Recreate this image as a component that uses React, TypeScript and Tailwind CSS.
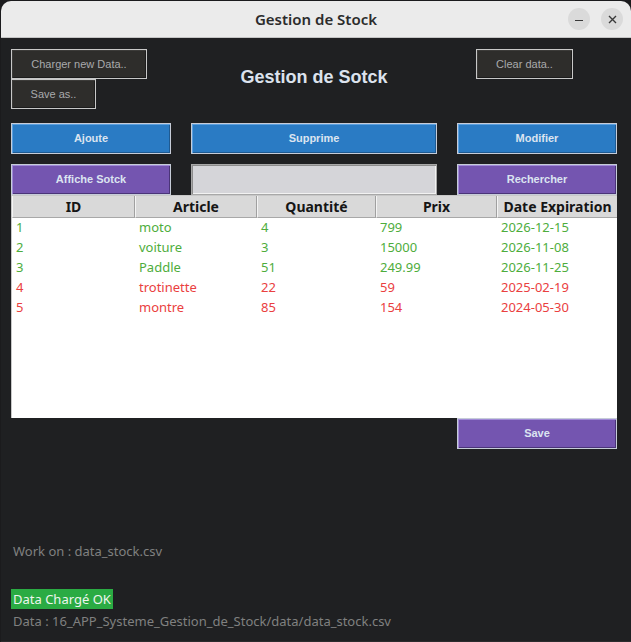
import React from 'react';

const rows = [
  { id: '1', article: 'moto', qte: '4', prix: '799', date: '2026-12-15', ok: true },
  { id: '2', article: 'voiture', qte: '3', prix: '15000', date: '2026-11-08', ok: true },
  { id: '3', article: 'Paddle', qte: '51', prix: '249.99', date: '2026-11-25', ok: true },
  { id: '4', article: 'trotinette', qte: '22', prix: '59', date: '2025-02-19', ok: false },
  { id: '5', article: 'montre', qte: '85', prix: '154', date: '2024-05-30', ok: false },
];

const cols = [
  { label: 'ID', w: 'w-[123px]' },
  { label: 'Article', w: 'w-[122px]' },
  { label: 'Quantité', w: 'w-[119px]' },
  { label: 'Prix', w: 'w-[121px]' },
  { label: 'Date Expiration', w: 'flex-1' },
];

const sans = "font-['Liberation_Sans',Arial,sans-serif]";
const noto = "font-['Noto_Sans',sans-serif]";

function DarkBtn({ label, w }: { label: string; w: string }) {
  return (
    <div
      className={`${w} h-[30px] flex items-center justify-center bg-[#2e2d2b] border border-[#c8c8c8] shadow-[inset_1px_1px_0_#3c3b39,inset_-1px_-1px_0_#1c1c1c] text-[11px] text-[#a9aaab] ${sans}`}
    >
      {label}
    </div>
  );
}

function ColorBtn({ label, w, kind }: { label: string; w: string; kind: 'blue' | 'purple' }) {
  const bg =
    kind === 'blue'
      ? 'bg-[#2a7bc4] shadow-[inset_1px_1px_0_#5aa0e0,inset_-1px_-1px_0_#1e5a92]'
      : 'bg-[#7455b0] shadow-[inset_1px_1px_0_#a08ad8,inset_-1px_-1px_0_#4a3478]';
  return (
    <div
      className={`${w} h-[31px] flex items-center justify-center border border-[#c6ccd8] ${bg} text-[11px] font-bold text-[#dbe4f0] ${sans}`}
    >
      {label}
    </div>
  );
}

export default function App() {
  return (
    <div className="w-[631px] h-[642px] bg-[#1b1b1d] overflow-hidden">
      <div className="w-[630px] h-[641px] ml-px mt-px flex flex-col rounded-t-[10px] overflow-hidden bg-[#1f2022] border-b border-[#2c2c2e]">
        {/* title bar */}
        <div className="h-[37px] shrink-0 bg-[#ebebeb] border-b border-[#c4c4c4] flex items-center relative">
          <div className={`flex-1 text-center text-[15px] text-[#2c2c2c] font-semibold ${noto}`}>Gestion de Stock</div>
          <div className="absolute right-[8px] top-[7px] flex gap-[11px]">
            <div className="w-[22px] h-[22px] rounded-full bg-[#dadada] flex items-center justify-center">
              <div className="w-[8px] h-[1.5px] bg-[#3a3a3a] mt-[3px]" />
            </div>
            <div className="w-[22px] h-[22px] rounded-full bg-[#dadada] flex items-center justify-center">
              <svg width="9" height="9" viewBox="0 0 9 9">
                <path d="M1 1 L8 8 M8 1 L1 8" stroke="#3a3a3a" strokeWidth="1.4" />
              </svg>
            </div>
          </div>
        </div>

        {/* content */}
        <div className="flex-1 w-[606px] ml-[10px] flex flex-col pt-[11px]">
          {/* top area */}
          <div className="flex h-[60px]">
            <div className="w-[165px] flex flex-col">
              <DarkBtn label="Charger new Data.." w="w-[136px]" />
              <DarkBtn label="Save as.." w="w-[85px]" />
            </div>
            <div className={`w-[276px] pt-[15px] text-center text-[18px] font-bold text-[#dce3ee] ${sans}`}>
              Gestion de Sotck
            </div>
            <div className="ml-[24px]">
              <DarkBtn label="Clear data.." w="w-[97px]" />
            </div>
          </div>

          {/* action buttons */}
          <div className="flex mt-[14px] h-[31px] gap-[20px]">
            <ColorBtn label="Ajoute" w="w-[160px]" kind="blue" />
            <ColorBtn label="Supprime" w="w-[246px]" kind="blue" />
            <ColorBtn label="Modifier" w="w-[160px]" kind="blue" />
          </div>
          <div className="flex mt-[10px] h-[31px] gap-[20px]">
            <ColorBtn label="Affiche Sotck" w="w-[160px]" kind="purple" />
            <div className="w-[246px] h-[31px] bg-[#d5d5d9] border border-[#a8a8a8] shadow-[inset_1px_1px_0_#8c8c8c,inset_-1px_-1px_0_#f2f2f2]" />
            <ColorBtn label="Rechercher" w="w-[160px]" kind="purple" />
          </div>

          {/* table */}
          <div className="w-[606px] h-[223px] bg-white border-l border-t border-[#c8c8c8] flex flex-col">
            <div className="flex h-[22px] bg-[#d9d9d9]">
              {cols.map((c, i) => (
                <div
                  key={c.label}
                  className={`${c.w} ${i < cols.length - 1 ? 'border-r border-r-[#a0a0a0]' : ''} border-l border-l-[#f4f4f4] border-b border-b-[#a8a8a8] flex items-center justify-center text-[14px] font-bold text-[#151515] ${noto}`}
                >
                  {c.label}
                </div>
              ))}
            </div>
            {rows.map((r) => (
              <div key={r.id} className={`flex h-[20px] items-center text-[13px] ${noto} ${r.ok ? 'text-[#4ead3c]' : 'text-[#ea4040]'}`}>
                <div className="w-[123px] pl-[4px]">{r.id}</div>
                <div className="w-[122px] pl-[4px]">{r.article}</div>
                <div className="w-[119px] pl-[4px]">{r.qte}</div>
                <div className="w-[121px] pl-[4px]">{r.prix}</div>
                <div className="flex-1 pl-[4px]">{r.date}</div>
              </div>
            ))}
          </div>

          <div className="flex justify-end">
            <ColorBtn label="Save" w="w-[160px]" kind="purple" />
          </div>

          {/* status */}
          <div className={`mt-[93px] pl-[2px] text-[13px] text-[#808080] ${noto}`}>Work on : data_stock.csv</div>
          <div className="mt-[24px]">
            <span className={`inline-block h-[20px] leading-[20px] px-[2px] bg-[#2aab43] text-[13px] text-[#eef6ee] ${noto}`}>
              Data Chargé OK
            </span>
          </div>
          <div className={`mt-[2px] pl-[2px] text-[13px] text-[#808080] ${noto}`}>
            Data : 16_APP_Systeme_Gestion_de_Stock/data/data_stock.csv
          </div>
        </div>
      </div>
    </div>
  );
}
